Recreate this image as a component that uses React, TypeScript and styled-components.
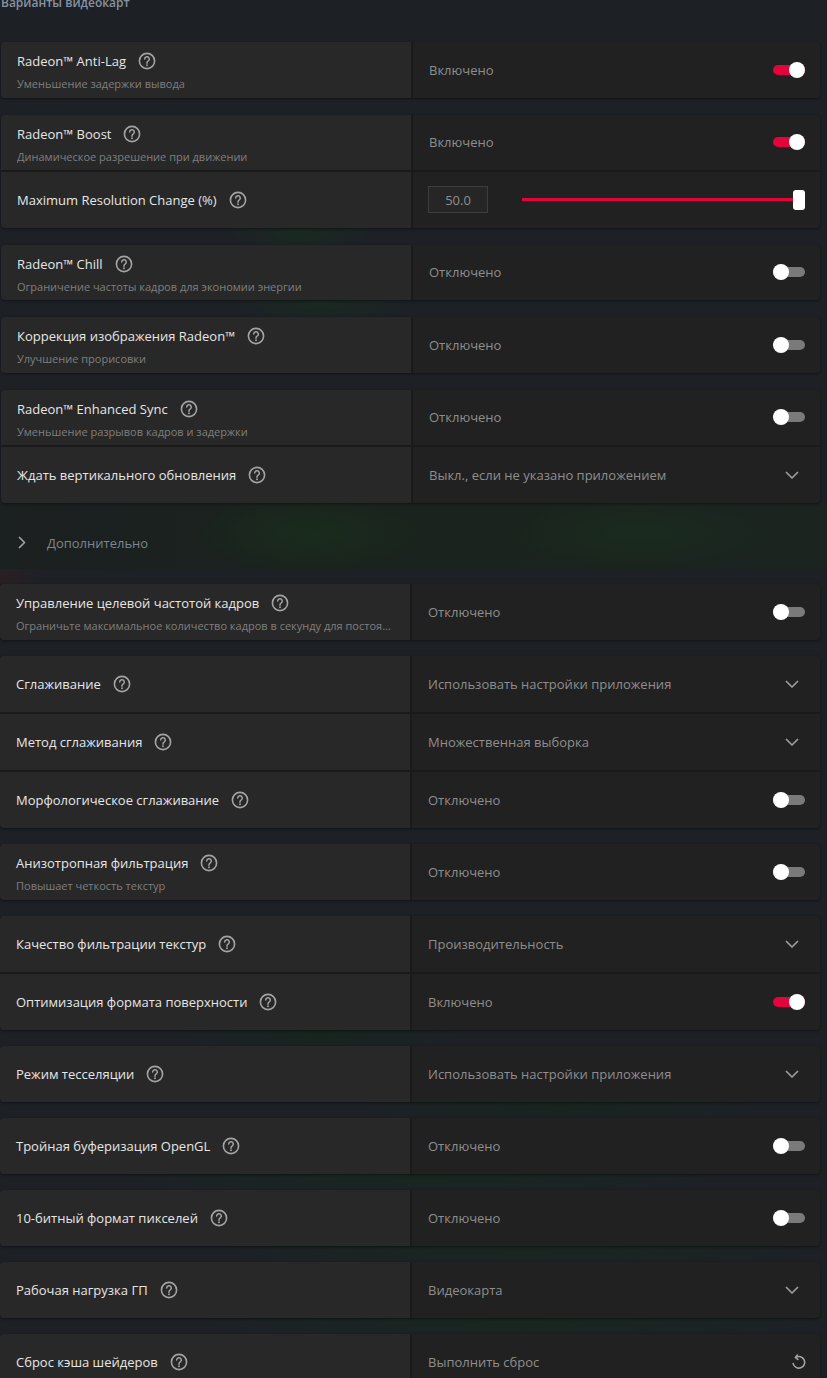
import React from "react";
import styled, { createGlobalStyle } from "styled-components";

const GlobalStyle = createGlobalStyle`
  html, body {
    margin: 0;
    padding: 0;
    overflow: hidden;
    background: #1d2126;
  }
  body {
    font-family: "Open Sans", "Noto Sans", "Liberation Sans", sans-serif;
    -webkit-font-smoothing: antialiased;
  }
  * { box-sizing: border-box; }
`;

const Page = styled.div`
  width: 827px;
  min-height: 1378px;
  padding: 0 7px 40px 0;
  background:
    radial-gradient(ellipse 70px 30px at 300px 236px, rgba(20, 48, 26, 0.55), transparent),
    radial-gradient(ellipse 90px 24px at 320px 308px, rgba(20, 48, 26, 0.5), transparent),
    radial-gradient(ellipse 140px 30px at 320px 1037px, rgba(16, 40, 22, 0.55), transparent),
    radial-gradient(ellipse 200px 26px at 560px 1110px, rgba(16, 40, 22, 0.5), transparent),
    radial-gradient(ellipse 300px 22px at 420px 1182px, rgba(18, 44, 24, 0.5), transparent),
    radial-gradient(ellipse 300px 22px at 520px 1254px, rgba(18, 44, 24, 0.5), transparent),
    radial-gradient(ellipse 320px 22px at 520px 1326px, rgba(18, 44, 24, 0.55), transparent),
    #1d2126;
`;

const Header = styled.div`
  height: 48px;
  padding-left: 1px;
  margin-top: -6px;
  color: #8892a0;
  font-size: 12px;
  font-weight: 600;
  line-height: 18px;
`;

const Section = styled.div<{ $indent: number; $gap: number }>`
  display: flex;
  flex-direction: column;
  gap: ${(p) => p.$gap}px;
  padding-left: ${(p) => p.$indent}px;
`;

const Card = styled.div`
  display: flex;
  flex-direction: column;
  gap: 2px;
  background: #1a1a1a;
  border-radius: 4px;
  overflow: hidden;
  box-shadow: 0 1px 3px rgba(0, 0, 0, 0.45);
`;

const Row = styled.div<{ $h: number }>`
  display: flex;
  height: ${(p) => p.$h}px;
`;

const Left = styled.div<{ $withSub: boolean }>`
  width: 410px;
  flex-shrink: 0;
  background: #282828;
  padding: ${(p) => (p.$withSub ? "5px" : "0")} 16px 0 16px;
  display: flex;
  flex-direction: column;
  justify-content: center;
  min-width: 0;
`;

const TitleLine = styled.div`
  display: flex;
  align-items: center;
  gap: 12px;
  height: 18px;
  color: #e6e6e6;
  font-size: 13px;
  line-height: 18px;
  white-space: nowrap;
`;

const Sub = styled.div`
  margin-top: 6px;
  color: #7f7f7f;
  font-size: 11px;
  line-height: 16px;
  white-space: nowrap;
  overflow: hidden;
  text-overflow: ellipsis;
`;

const Right = styled.div`
  flex: 1;
  margin-left: 2px;
  background: #212121;
  display: flex;
  align-items: center;
  padding: 0 15px 0 16px;
  min-width: 0;
`;

const Value = styled.div`
  flex: 1;
  color: #8e8e8e;
  font-size: 13px;
  line-height: 18px;
  white-space: nowrap;
`;

const ToggleBox = styled.div`
  position: relative;
  width: 32px;
  height: 16px;
  flex-shrink: 0;
`;

const ToggleTrack = styled.div<{ $on: boolean }>`
  position: absolute;
  left: 0;
  right: 0;
  top: 3px;
  height: 10px;
  border-radius: 5px;
  background: ${(p) => (p.$on ? "#e1053c" : "#7a7a7a")};
`;

const ToggleKnob = styled.div<{ $on: boolean }>`
  position: absolute;
  top: 0;
  ${(p) => (p.$on ? "right: 0;" : "left: 0;")}
  width: 16px;
  height: 16px;
  border-radius: 50%;
  background: #ffffff;
`;

const NumBox = styled.div`
  width: 60px;
  height: 27px;
  flex-shrink: 0;
  margin-left: -1px;
  border: 1px solid #3e3e3e;
  background: #262626;
  color: #8e8e8e;
  font-size: 13px;
  display: flex;
  align-items: center;
  justify-content: center;
`;

const SliderWrap = styled.div`
  position: relative;
  flex: 1;
  height: 20px;
  margin-left: 34px;
  display: flex;
  align-items: center;
`;

const SliderTrack = styled.div`
  width: 100%;
  height: 3px;
  margin-right: 6px;
  background: #e1053c;
`;

const SliderThumb = styled.div`
  position: absolute;
  right: 0;
  top: 0;
  width: 12px;
  height: 20px;
  border-radius: 3px;
  background: #ffffff;
`;

const IconSlot = styled.div<{ $mr: number }>`
  display: flex;
  align-items: center;
  margin-right: ${(p) => p.$mr}px;
  flex-shrink: 0;
`;

const Advanced = styled.div`
  height: 66px;
  display: flex;
  align-items: center;
  padding: 14px 0 0 18px;
  gap: 21px;
  margin-right: -7px;
  background:
    radial-gradient(ellipse 120px 40px at 310px 30px, rgba(24, 50, 28, 0.6), transparent),
    radial-gradient(ellipse 140px 40px at 640px 30px, rgba(24, 50, 28, 0.5), transparent),
    linear-gradient(90deg, #1b2020, #1a231d 50%, #1b2420);
  color: #7d858f;
  font-size: 13px;
`;

const Gap = styled.div`
  height: 15px;
  margin-right: -7px;
  background: linear-gradient(90deg, #2a1f22 0, #1d2126 40px);
`;

type Ctrl =
  | { type: "toggle"; on: boolean }
  | { type: "slider"; value: string }
  | { type: "dropdown"; value: string }
  | { type: "reset"; value: string };

type Item = { title: string; sub?: string; ctrl: Ctrl };

const HelpIcon = () => (
  <svg width="18" height="18" viewBox="0 0 18 18" fill="none">
    <circle cx="9" cy="9" r="7.6" stroke="#a3a3a3" strokeWidth="1.6" />
    <path
      d="M6.7 7.1a2.3 2.3 0 1 1 3.4 2c-.7.4-1.1.8-1.1 1.6v.5"
      stroke="#a3a3a3"
      strokeWidth="1.5"
      strokeLinecap="round"
    />
    <circle cx="9" cy="13.2" r="0.95" fill="#a3a3a3" />
  </svg>
);

const ChevronDown = () => (
  <svg width="14" height="8" viewBox="0 0 14 8" fill="none">
    <polyline points="1,1 7,7 13,1" stroke="#9c9c9c" strokeWidth="1.7" strokeLinejoin="round" />
  </svg>
);

const ChevronRight = () => (
  <svg width="8" height="13" viewBox="0 0 8 13" fill="none">
    <polyline points="1,1 6.5,6.5 1,12" stroke="#9aa0a6" strokeWidth="1.7" strokeLinejoin="round" />
  </svg>
);

const ResetIcon = () => (
  <svg width="15" height="16" viewBox="0 0 15 16" fill="none">
    <path
      d="M4.8 3.4 A5.8 5.8 0 1 1 2.2 9.6"
      stroke="#a3a3a3"
      strokeWidth="1.6"
      strokeLinecap="round"
    />
    <polyline points="6.4,1 4.4,3.4 6.8,5.4" stroke="#a3a3a3" strokeWidth="1.6" strokeLinecap="round" strokeLinejoin="round" />
  </svg>
);

const Toggle = ({ on }: { on: boolean }) => (
  <ToggleBox>
    <ToggleTrack $on={on} />
    <ToggleKnob $on={on} />
  </ToggleBox>
);

const Control = ({ ctrl }: { ctrl: Ctrl }) => {
  switch (ctrl.type) {
    case "toggle":
      return (
        <>
          <Value>{ctrl.on ? "Включено" : "Отключено"}</Value>
          <Toggle on={ctrl.on} />
        </>
      );
    case "slider":
      return (
        <>
          <NumBox>{ctrl.value}</NumBox>
          <SliderWrap>
            <SliderTrack />
            <SliderThumb />
          </SliderWrap>
        </>
      );
    case "dropdown":
      return (
        <>
          <Value>{ctrl.value}</Value>
          <IconSlot $mr={6}>
            <ChevronDown />
          </IconSlot>
        </>
      );
    case "reset":
      return (
        <>
          <Value>{ctrl.value}</Value>
          <IconSlot $mr={-1}>
            <ResetIcon />
          </IconSlot>
        </>
      );
  }
};

const SettingRow = ({ item, h }: { item: Item; h: number }) => (
  <Row $h={h}>
    <Left $withSub={!!item.sub}>
      <TitleLine>
        <span>{item.title}</span>
        <HelpIcon />
      </TitleLine>
      {item.sub && <Sub>{item.sub}</Sub>}
    </Left>
    <Right>
      <Control ctrl={item.ctrl} />
    </Right>
  </Row>
);

const off: Ctrl = { type: "toggle", on: false };
const on: Ctrl = { type: "toggle", on: true };

const graphics: Item[][] = [
  [{ title: "Radeon™ Anti-Lag", sub: "Уменьшение задержки вывода", ctrl: on }],
  [
    { title: "Radeon™ Boost", sub: "Динамическое разрешение при движении", ctrl: on },
    { title: "Maximum Resolution Change (%)", ctrl: { type: "slider", value: "50.0" } },
  ],
  [{ title: "Radeon™ Chill", sub: "Ограничение частоты кадров для экономии энергии", ctrl: off }],
  [{ title: "Коррекция изображения Radeon™", sub: "Улучшение прорисовки", ctrl: off }],
  [
    { title: "Radeon™ Enhanced Sync", sub: "Уменьшение разрывов кадров и задержки", ctrl: off },
    {
      title: "Ждать вертикального обновления",
      ctrl: { type: "dropdown", value: "Выкл., если не указано приложением" },
    },
  ],
];

const advanced: Item[][] = [
  [
    {
      title: "Управление целевой частотой кадров",
      sub: "Ограничьте максимальное количество кадров в секунду для постоянной производительности",
      ctrl: off,
    },
  ],
  [
    { title: "Сглаживание", ctrl: { type: "dropdown", value: "Использовать настройки приложения" } },
    { title: "Метод сглаживания", ctrl: { type: "dropdown", value: "Множественная выборка" } },
    { title: "Морфологическое сглаживание", ctrl: off },
  ],
  [{ title: "Анизотропная фильтрация", sub: "Повышает четкость текстур", ctrl: off }],
  [
    { title: "Качество фильтрации текстур", ctrl: { type: "dropdown", value: "Производительность" } },
    { title: "Оптимизация формата поверхности", ctrl: on },
  ],
  [{ title: "Режим тесселяции", ctrl: { type: "dropdown", value: "Использовать настройки приложения" } }],
  [{ title: "Тройная буферизация OpenGL", ctrl: off }],
  [{ title: "10-битный формат пикселей", ctrl: off }],
  [{ title: "Рабочая нагрузка ГП", ctrl: { type: "dropdown", value: "Видеокарта" } }],
  [{ title: "Сброс кэша шейдеров", ctrl: { type: "reset", value: "Выполнить сброс" } }],
];

const renderGroups = (groups: Item[][], h: number) =>
  groups.map((g, i) => (
    <Card key={i}>
      {g.map((item) => (
        <SettingRow key={item.title} item={item} h={h} />
      ))}
    </Card>
  ));

export default function App() {
  return (
    <>
      <GlobalStyle />
      <Page>
        <Header>Варианты видеокарт</Header>
        <Section $indent={1} $gap={17}>
          {renderGroups(graphics, 55.5)}
        </Section>
        <Advanced>
          <ChevronRight />
          <span>Дополнительно</span>
        </Advanced>
        <Gap />
        <Section $indent={0} $gap={16}>
          {renderGroups(advanced, 56)}
        </Section>
      </Page>
    </>
  );
}
